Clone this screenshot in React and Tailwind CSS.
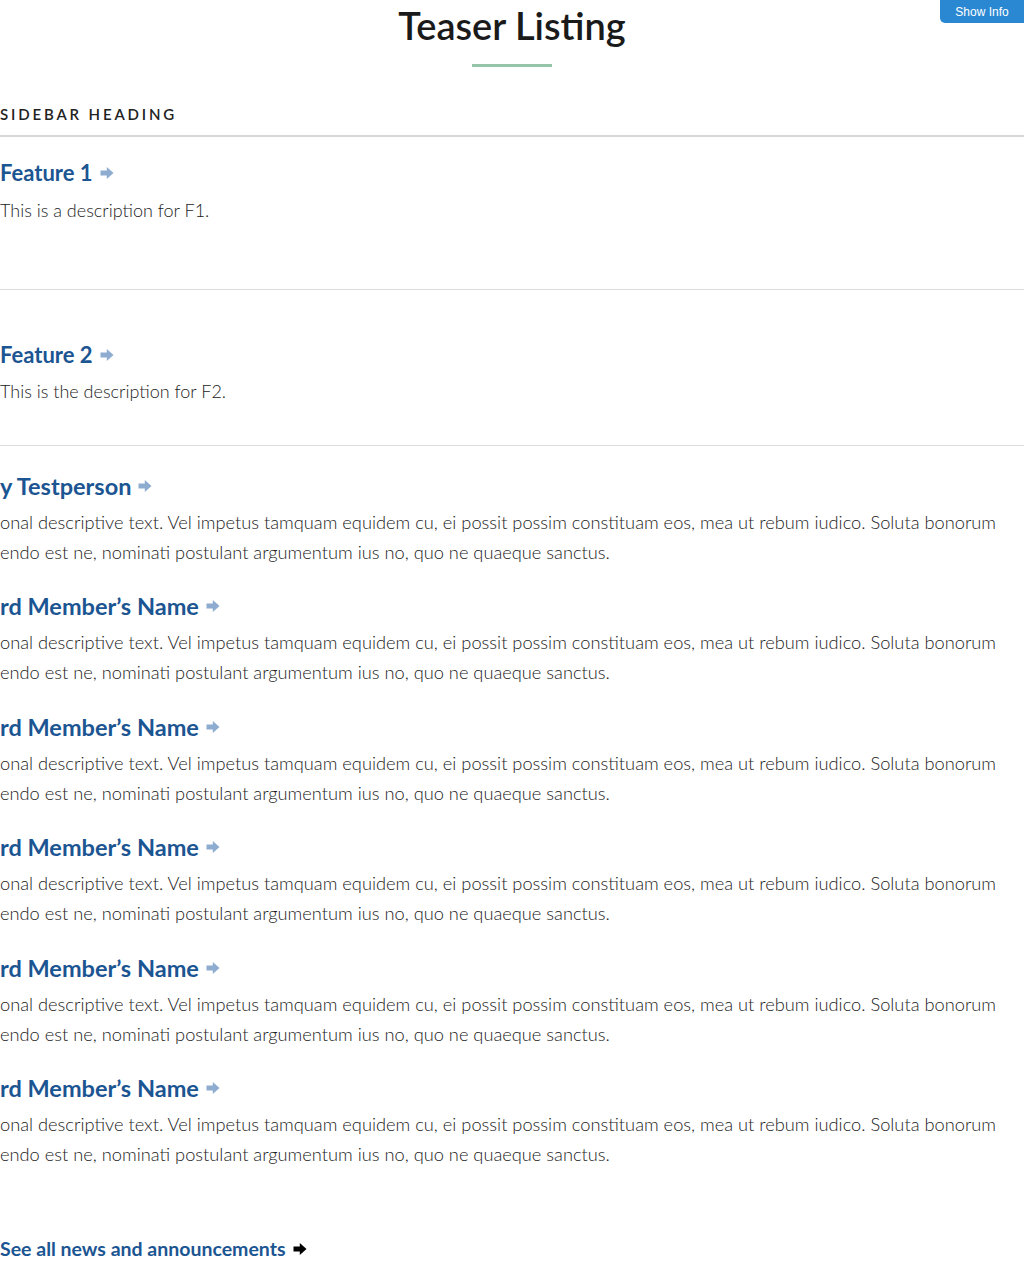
import React from 'react';

function Arrow({ className = 'text-[#8eacd0]' }) {
  return (
    <svg viewBox="0 0 14 14" className={`inline-block w-[14px] h-[14px] ml-[7px] ${className}`} fill="currentColor">
      <path d="M0.5 4.6h6.3V1L13.5 7l-6.7 6V9.4H0.5z" />
    </svg>
  );
}

const body =
  'onal descriptive text. Vel impetus tamquam equidem cu, ei possit possim constituam eos, mea ut rebum iudico. Soluta bonorum';
const body2 = 'endo est ne, nominati postulant argumentum ius no, quo ne quaeque sanctus.';

const people = ['y Testperson', 'rd Member’s Name', 'rd Member’s Name', 'rd Member’s Name', 'rd Member’s Name', 'rd Member’s Name'];

export default function App() {
  return (
    <div className="relative min-h-[1267px] bg-white overflow-hidden font-['Lato','Noto_Sans',sans-serif] text-[#2b2b2b]">
      <button className="absolute top-0 right-0 w-[84px] h-[23px] bg-[#2a88d2] rounded-bl-[5px] text-white text-[12px] font-['Liberation_Sans',Arial,sans-serif]">
        Show Info
      </button>

      {/* title */}
      <div className="flex flex-col items-center pt-[2px]">
        <h1 className="text-[38px] leading-[46px] font-semibold text-[#1a1a1a]">Teaser Listing</h1>
        <div className="w-[80px] h-[3px] bg-[#96c4a9] mt-[16px]" />
      </div>

      {/* sidebar heading */}
      <div className="mt-[37px] border-b-2 border-[#d8d8d8] pb-[11px]">
        <h2 className="text-[15px] leading-[20px] font-semibold tracking-[0.19em] text-[#222]">SIDEBAR HEADING</h2>
      </div>

      {/* features */}
      <div className="border-b border-[#dcdcdc] pt-[22px] h-[153px]">
        <a className="flex items-center text-[22px] leading-[28px] font-bold text-[#1b5592]">
          Feature 1<Arrow />
        </a>
        <p className="mt-[10px] text-[18px] leading-[26px] font-light text-[#222]">This is a description for F1.</p>
      </div>
      <div className="border-b border-[#dcdcdc] pt-[51px] h-[156px]">
        <a className="flex items-center text-[22px] leading-[28px] font-bold text-[#1b5592]">
          Feature 2<Arrow />
        </a>
        <p className="mt-[9px] text-[18px] leading-[26px] font-light text-[#222]">This is the description for F2.</p>
      </div>

      {/* people */}
      <div className="pt-[26px] flex flex-col gap-[25.4px]">
        {people.map((name, i) => (
          <div key={i}>
            <a className="flex items-center text-[23.5px] leading-[28px] font-bold text-[#1b5592]">
              {name}
              <Arrow />
            </a>
            <p className="mt-[7px] text-[18.25px] leading-[30px] font-light text-[#222] whitespace-nowrap">
              {body}
              <br />
              {body2}
            </p>
          </div>
        ))}
      </div>

      <div className="mt-[67px]">
        <a className="flex items-center text-[19.5px] leading-[26px] font-bold text-[#1b5592]">
          See all news and announcements
          <Arrow className="text-black" />
        </a>
      </div>
    </div>
  );
}
